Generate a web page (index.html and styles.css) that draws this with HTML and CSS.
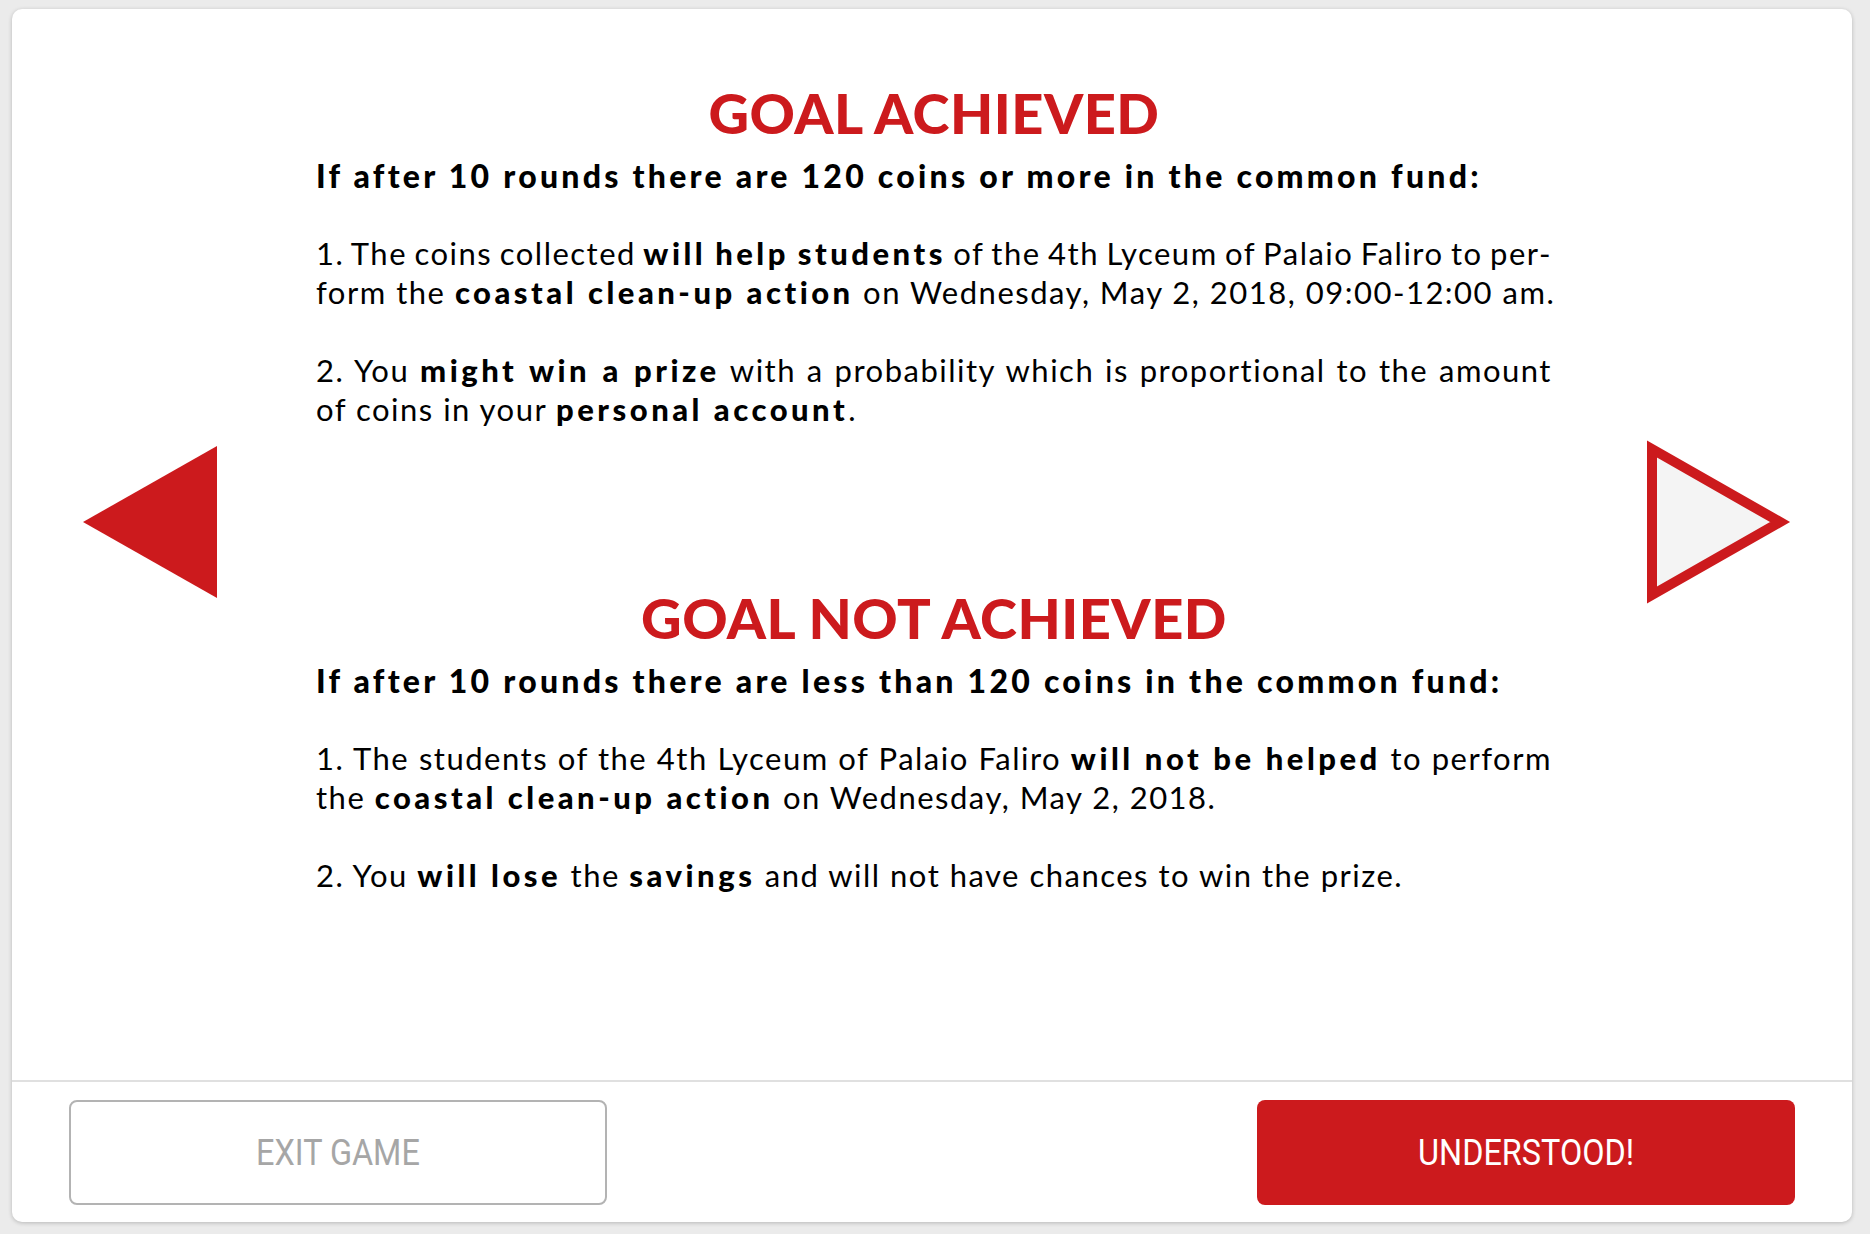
FILE: index.html
```html
<!DOCTYPE html>
<html lang="en">
<head>
<meta charset="utf-8">
<title>Goal rules</title>
<link rel="stylesheet" href="styles.css">
</head>
<body>
<div class="page">
  <div class="card">
    <div class="main">
      <div class="side side-left">
        <svg class="arrow arrow-left" viewBox="0 0 134 152" width="134" height="152"><polygon points="0,76 134,0 134,152" fill="#cc1a1d"/></svg>
      </div>
      <div class="content">
        <section class="block">
          <h1 class="title">GOAL ACHIEVED</h1>
          <p class="lead">If after 10 rounds there are 120 coins or more in the common fund:</p>
          <p class="para"><span class="jline">1. The coins collected <b>will help students</b> of the 4th Lyceum of Palaio Faliro to per-</span>form the <b>coastal clean-up action</b> on Wednesday, May 2, 2018, 09:00-12:00 am.</p>
          <p class="para"><span class="jline">2. You <b>might win a prize</b> with a probability which is proportional to the amount</span>of coins in your <b>personal account</b>.</p>
        </section>
        <section class="block block-second">
          <h1 class="title">GOAL NOT ACHIEVED</h1>
          <p class="lead">If after 10 rounds there are less than 120 coins in the common fund:</p>
          <p class="para"><span class="jline">1. The students of the 4th Lyceum of Palaio Faliro <b>will not be helped</b> to perform</span>the <b>coastal clean-up action</b> on Wednesday, May 2, 2018.</p>
          <p class="para">2. You <b>will lose</b> the <b>savings</b> and will not have chances to win the prize.</p>
        </section>
      </div>
      <div class="side side-right">
        <svg class="arrow arrow-right" viewBox="0 0 142 164" width="142" height="164"><polygon points="5,9 133,82 5,155" fill="#f4f4f4" stroke="#cc1a1d" stroke-width="10"/></svg>
      </div>
    </div>
    <div class="footer">
      <button class="btn btn-exit" type="button"><span class="btn-label">EXIT GAME</span></button>
      <button class="btn btn-ok" type="button"><span class="btn-label">UNDERSTOOD!</span></button>
    </div>
  </div>
</div>
</body>
</html>
```
FILE: styles.css
```css
* { box-sizing: border-box; }
html, body { margin: 0; padding: 0; }
body {
  background: #ebebeb;
  font-family: "Lato", "Noto Sans", sans-serif;
  color: #000;
  width: 1870px;
  height: 1234px;
  overflow: hidden;
}
.page {
  padding: 9px 18px 12px 12px;
  height: 1234px;
}
.card {
  background: #fff;
  border-radius: 10px;
  box-shadow: 0 1px 4px rgba(0,0,0,0.22);
  height: 1213px;
  display: flex;
  flex-direction: column;
}
.main {
  flex: 1;
  display: grid;
  grid-template-columns: 1fr 1240px 1fr;
}
.side {
  display: flex;
  align-items: center;
  padding-bottom: 46px;
}
.side-left { justify-content: flex-end; padding-right: 95px; }
.side-right { justify-content: flex-start; padding-left: 95px; }
.arrow { display: block; overflow: visible; }
.content {
  padding-top: 74px;
  padding-left: 4px;
}
.title {
  margin: 0;
  text-align: center;
  color: #cc1a1d;
  font-weight: 900;
  font-size: 56px;
  line-height: 60px;
  letter-spacing: 0.5px;
}
.lead {
  margin: 13px 0 0;
  font-weight: 900;
  font-size: 32px;
  line-height: 39px;
  letter-spacing: 3.25px;
  white-space: nowrap;
}
.para {
  margin: 39px 0 0;
  font-size: 31px;
  line-height: 39px;
  letter-spacing: 1.5px;
  text-align: left;
  white-space: nowrap;
}
.para b { font-weight: 900; letter-spacing: 3.5px; }
.jline {
  display: block;
  word-spacing: -2.5px;
  text-align: justify;
  text-align-last: justify;
}
.block-second { margin-top: 159px; }
.footer {
  border-top: 2px solid #e0e0e0;
  display: flex;
  justify-content: space-between;
  padding: 18px 57px 17px;
}
.btn {
  width: 538px;
  height: 105px;
  border-radius: 8px;
  font-family: "Roboto", "Liberation Sans", sans-serif;
  font-size: 36px;
  font-weight: 400;
  cursor: pointer;
  padding: 0;
}
.btn-label {
  display: inline-block;
  transform: scaleX(0.9);
}
.btn-exit {
  background: #fff;
  border: 2px solid #b3b3b3;
  color: #a6a6a6;
}
.btn-ok {
  background: #cc1a1d;
  border: none;
  color: #fff;
}
```
